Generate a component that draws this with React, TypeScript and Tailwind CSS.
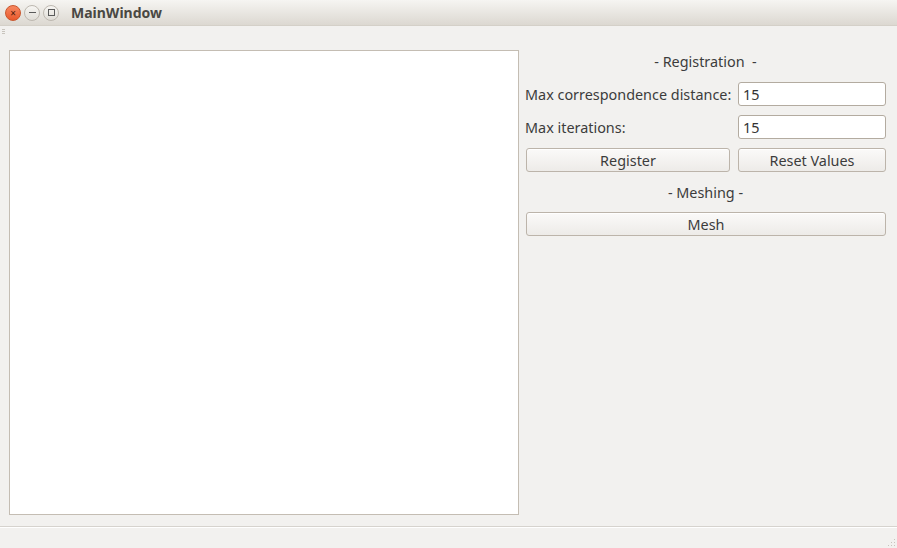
import React from "react";

const font = { fontFamily: '"Noto Sans", "Open Sans", sans-serif' };

function Btn({ label, className }: { label: string; className?: string }) {
  return (
    <div
      className={`h-[24px] pt-[2px] flex items-center justify-center rounded-[3px] border border-[#bcb4aa] bg-gradient-to-b from-[#fbfaf9] to-[#edebe8] text-[14.4px] text-[#3c3c3c] shadow-[inset_0_1px_0_#ffffff] ${className ?? ""}`}
    >
      {label}
    </div>
  );
}

function Field({ value }: { value: string }) {
  return (
    <div className="h-[24px] w-[148px] pt-[2px] flex items-center rounded-[3px] border border-[#b3aba0] bg-white pl-[4px] text-[14.4px] text-[#333]">
      {value}
    </div>
  );
}

export default function App() {
  return (
    <div className="w-[897px] h-[548px] flex flex-col bg-[#f2f1ef] overflow-hidden" style={font}>
      {/* Title bar */}
      <div className="h-[26px] flex items-center bg-gradient-to-b from-[#f6f5f2] to-[#dcd8d1] border-b border-[#d4d0c8]">
        <div className="flex items-center gap-[3px] pl-[5px]">
          <div className="w-[16px] h-[16px] rounded-full bg-gradient-to-b from-[#f7875f] to-[#e9582a] border border-[#c9552c] flex items-center justify-center text-[10px] leading-none text-[#4a1c0c]">
            ×
          </div>
          <div className="w-[16px] h-[16px] rounded-full bg-gradient-to-b from-[#f7f6f3] to-[#e0ddd7] border border-[#bdb8b0] flex items-center justify-center">
            <div className="w-[7px] h-[1px] bg-[#5a5a5a]" />
          </div>
          <div className="w-[16px] h-[16px] rounded-full bg-gradient-to-b from-[#f7f6f3] to-[#e0ddd7] border border-[#bdb8b0] flex items-center justify-center">
            <div className="w-[7px] h-[7px] border border-[#5a5a5a]" />
          </div>
        </div>
        <div className="ml-[12px] text-[14px] font-bold text-[#4a4843]">MainWindow</div>
      </div>

      {/* Toolbar handle */}
      <div className="h-[14px] flex items-start pl-[2px] pt-[3px]">
        <div className="flex flex-col gap-[1px]">
          <div className="w-[3px] h-[1px] bg-[#c8c4bd]" />
          <div className="w-[3px] h-[1px] bg-[#c8c4bd]" />
          <div className="w-[3px] h-[1px] bg-[#c8c4bd]" />
        </div>
      </div>

      {/* Central */}
      <div className="flex-1 flex pl-[9px] pt-[10px] pb-[11px] pr-[11px] gap-[6px]">
        <div className="w-[510px] bg-white border border-[#c4bdb3]" />
        <div className="flex-1 flex flex-col text-[14.4px] text-[#3c3c3c]">
          <div className="h-[24px] flex items-center justify-center">- Registration&nbsp; -</div>
          <div className="mt-[8px] flex items-center justify-between">
            <span className="pt-[2px]">Max correspondence distance:</span>
            <Field value="15" />
          </div>
          <div className="mt-[9px] flex items-center justify-between">
            <span className="pt-[2px]">Max iterations:</span>
            <Field value="15" />
          </div>
          <div className="mt-[9px] flex items-center">
            <Btn label="Register" className="ml-[1px] w-[204px]" />
            <Btn label="Reset Values" className="ml-auto w-[148px]" />
          </div>
          <div className="h-[24px] mt-[8px] pt-[2px] flex items-center justify-center">- Meshing -</div>
          <div className="mt-[8px] flex">
            <Btn label="Mesh" className="ml-[1px] flex-1" />
          </div>
        </div>
      </div>

      {/* Status bar */}
      <div className="h-[22px] border-t border-[#d6d3ce] shadow-[inset_0_1px_0_#ffffff] relative">
        <div className="absolute right-[2px] bottom-[2px] grid grid-cols-3 gap-[2px]">
          <div className="w-[1px] h-[1px]" />
          <div className="w-[1px] h-[1px]" />
          <div className="w-[1px] h-[1px] bg-[#c8c4bd]" />
          <div className="w-[1px] h-[1px]" />
          <div className="w-[1px] h-[1px] bg-[#c8c4bd]" />
          <div className="w-[1px] h-[1px] bg-[#c8c4bd]" />
          <div className="w-[1px] h-[1px] bg-[#c8c4bd]" />
          <div className="w-[1px] h-[1px] bg-[#c8c4bd]" />
          <div className="w-[1px] h-[1px] bg-[#c8c4bd]" />
        </div>
      </div>
    </div>
  );
}
